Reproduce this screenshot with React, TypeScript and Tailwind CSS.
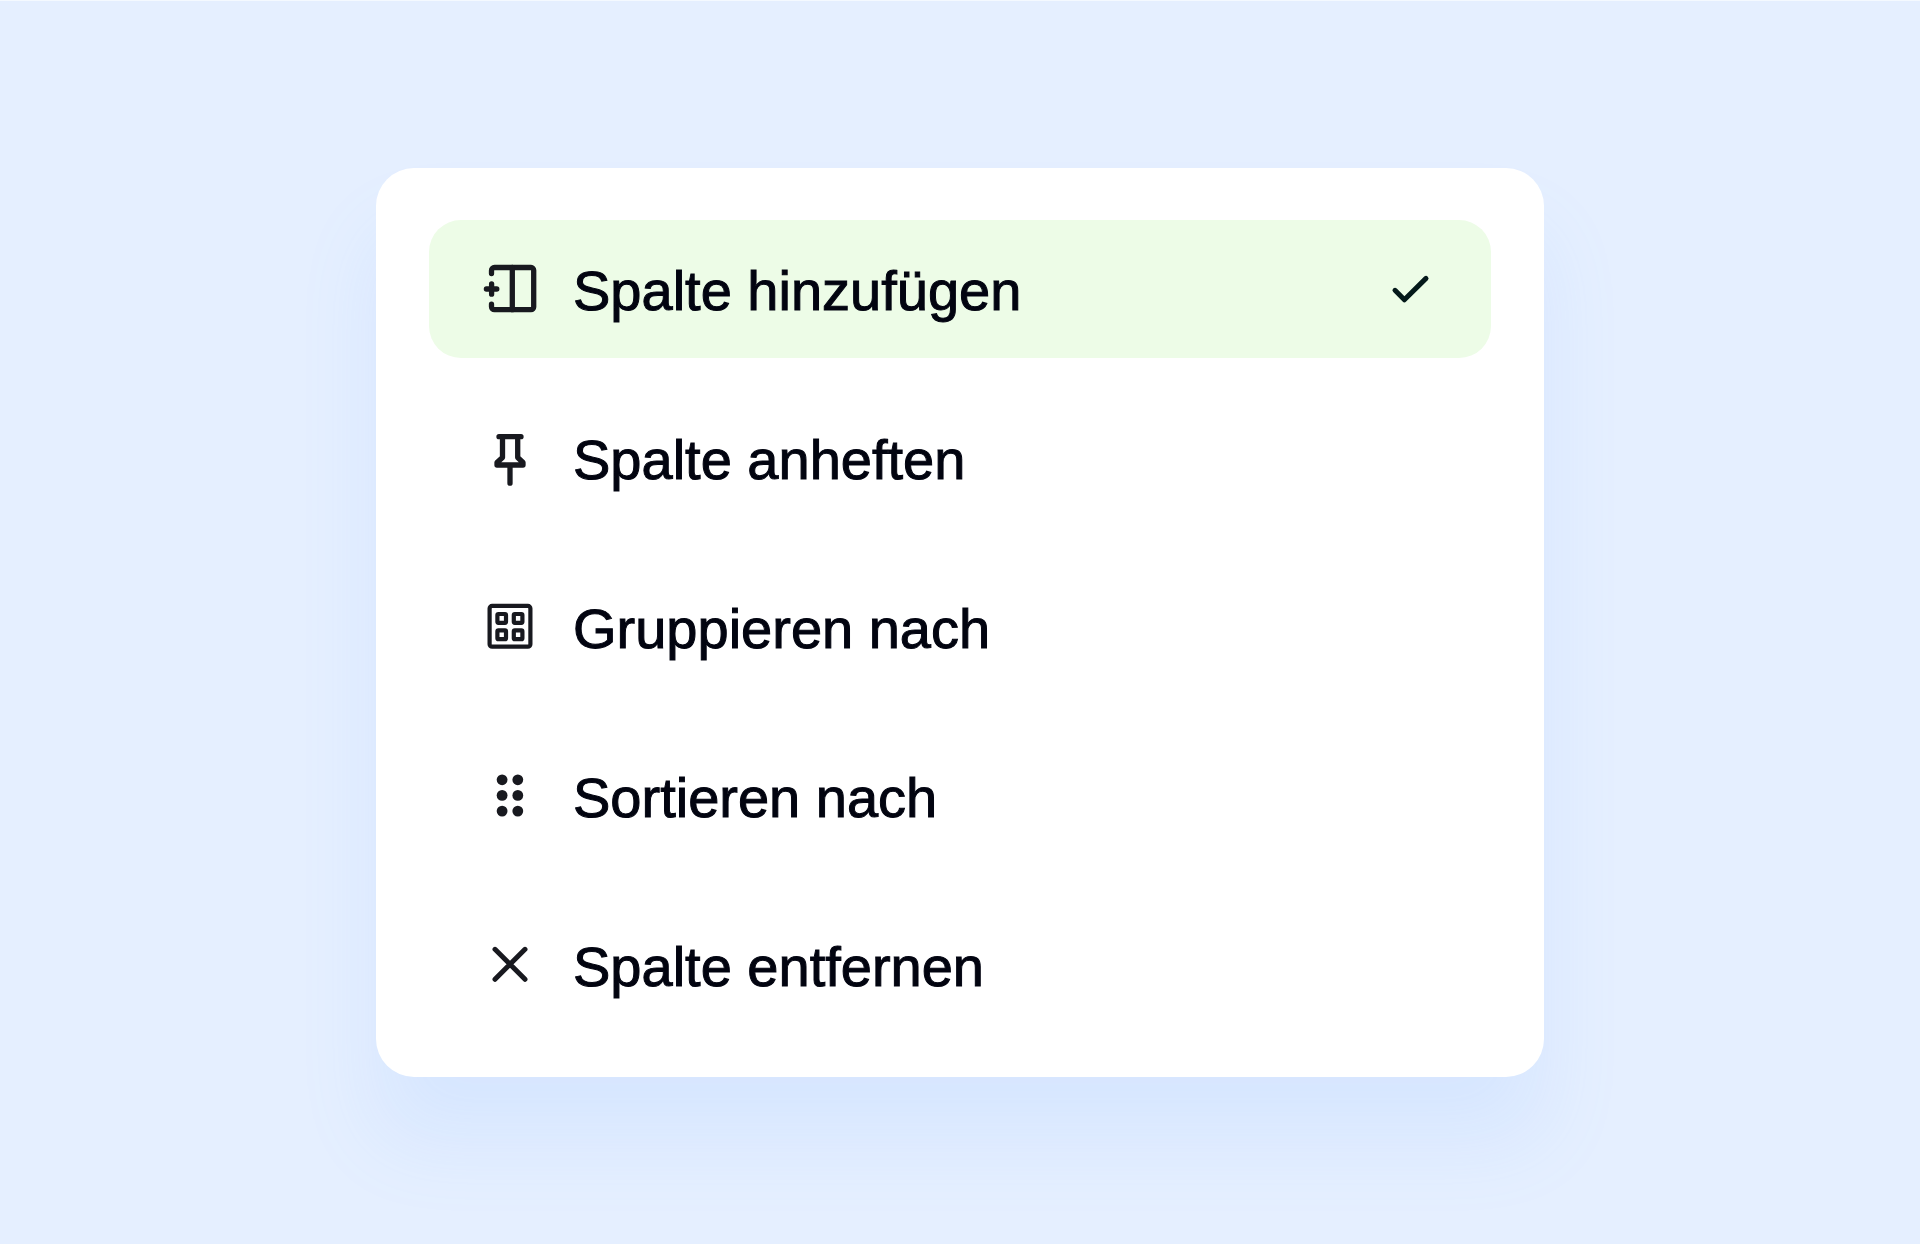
import type { ReactNode } from 'react';

type IconProps = { children: ReactNode; strokeWidth?: number; className?: string };

function Icon({ children, strokeWidth = 5.3, className = 'text-[#18191f]' }: IconProps) {
  return (
    <svg
      viewBox="0 0 56 56"
      aria-hidden="true"
      className={`size-14 shrink-0 ${className}`}
      fill="none"
      stroke="currentColor"
      strokeWidth={strokeWidth}
      strokeLinecap="round"
      strokeLinejoin="round"
    >
      {children}
    </svg>
  );
}

const items: { label: string; icon: ReactNode; selected?: boolean }[] = [
  {
    label: 'Spalte hinzufügen',
    selected: true,
    icon: (
      <Icon>
        <path d="M9.5 12.5V9.5a3 3 0 0 1 3-3H49a2.7 2.7 0 0 1 2.7 2.7V46a2.7 2.7 0 0 1-2.7 2.7H12.5a3 3 0 0 1-3-3V43.2" />
        <path d="M30.3 6.5V48.7M9.6 22.8V33.2M4.4 28H14.8" />
      </Icon>
    ),
  },
  {
    label: 'Spalte anheften',
    icon: (
      <Icon>
        <path d="M17 6.7H39M20.5 6.7V27.5L15 32.5V35H41V32.5L35.7 27.5V6.7M28 35V53.2" />
      </Icon>
    ),
  },
  {
    label: 'Gruppieren nach',
    icon: (
      <Icon strokeWidth={4.2}>
        <rect x="7.6" y="6.9" width="40.8" height="40.8" rx="2.5" />
        <rect x="15.4" y="15" width="8.6" height="8.8" rx="1" />
        <rect x="31.8" y="15" width="8.6" height="8.8" rx="1" />
        <rect x="15.4" y="31.4" width="8.6" height="8.8" rx="1" />
        <rect x="31.8" y="31.4" width="8.6" height="8.8" rx="1" />
      </Icon>
    ),
  },
  {
    label: 'Sortieren nach',
    icon: (
      <Icon>
        <g fill="currentColor" stroke="none">
          <circle cx="20.1" cy="11.8" r="5.4" />
          <circle cx="35.8" cy="11.8" r="5.4" />
          <circle cx="20.1" cy="27.4" r="5.4" />
          <circle cx="35.8" cy="27.4" r="5.4" />
          <circle cx="20.1" cy="43.1" r="5.4" />
          <circle cx="35.8" cy="43.1" r="5.4" />
        </g>
      </Icon>
    ),
  },
  {
    label: 'Spalte entfernen',
    icon: (
      <Icon strokeWidth={5}>
        <path d="M13 12.3L43 42.3M43 12.3L13 42.3" />
      </Icon>
    ),
  },
];

export default function App() {
  return (
    <main className="min-h-screen border-t border-[#f4f9ff] bg-[#e5efff] px-8 pt-[167px] pb-[167px] font-['Liberation_Sans',Arial,sans-serif]">
      <div
        role="menu"
        aria-label="Spaltenoptionen"
        className="mx-auto flex max-w-[1168px] flex-col gap-[31px] rounded-[38px] bg-white px-[53px] pt-[52px] pb-[43px] shadow-[0_64px_80px_rgba(115,175,255,0.12)]"
      >
        {items.map(({ label, icon, selected }) => (
          <button
            key={label}
            type="button"
            role="menuitemradio"
            aria-checked={Boolean(selected)}
            className={`flex w-full items-center gap-[35px] rounded-[32px] px-[53px] py-[41px] text-left ${
              selected ? 'bg-[#edfce7]' : 'bg-white'
            }`}
          >
            {icon}
            <span className="flex-1 pt-1 text-[56px] leading-[52px] text-[#020410] [-webkit-text-stroke:1px_#020410]">
              {label}
            </span>
            {selected && (
              <Icon strokeWidth={5} className="text-[#04191a]">
                <path d="M13 29.3L22.4 38.8L44 17.4" />
              </Icon>
            )}
          </button>
        ))}
      </div>
    </main>
  );
}
